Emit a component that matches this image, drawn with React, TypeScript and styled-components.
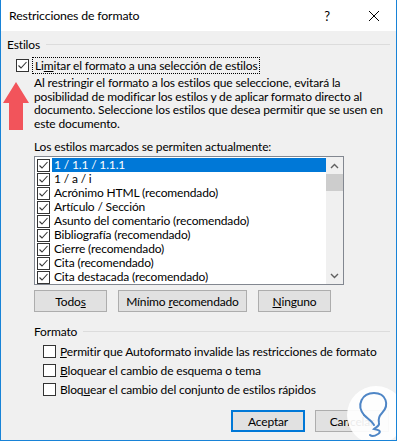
import styled, { createGlobalStyle } from 'styled-components';

const GlobalStyle = createGlobalStyle`
  html, body { margin: 0; padding: 0; background: #fff; }
  body { font-family: Lato, 'Liberation Sans', sans-serif; font-size: 12px; letter-spacing: -0.15px; color: #000; }
`;

const styles = [
  '1 / 1.1 / 1.1.1',
  '1 / a / i',
  'Acrónimo HTML (recomendado)',
  'Artículo / Sección',
  'Asunto del comentario (recomendado)',
  'Bibliografía (recomendado)',
  'Cierre (recomendado)',
  'Cita (recomendado)',
  'Cita destacada (recomendado)',
];

const Check = ({ checked }: { checked?: boolean }) => (
  <Box>
    {checked && (
      <svg width="11" height="11" viewBox="0 0 11 11">
        <path d="M1.5 5.5 L4 8 L9.5 2" fill="none" stroke="#333" strokeWidth="1.1" />
      </svg>
    )}
  </Box>
);

const App = () => (
  <>
    <GlobalStyle />
    <Window>
      <TitleBar>
        <Title>Restricciones de formato</Title>
        <Help>?</Help>
        <Close>
          <svg width="12" height="12" viewBox="0 0 12 12">
            <path d="M1 1 L11 11 M11 1 L1 11" stroke="#000" strokeWidth="1" />
          </svg>
        </Close>
      </TitleBar>

      <Body>
        <GroupHeader>
          <span>Estilos</span>
          <Rule />
        </GroupHeader>

        <MainOption>
          <Check checked />
          <Focus>
            Li<u>m</u>itar el formato a una selección de estilos
          </Focus>
        </MainOption>

        <Indented>
          <Paragraph>
            Al restringir el formato a los estilos que seleccione, evitará la
            <br />
            posibilidad de modificar los estilos y de aplicar formato directo al
            <br />
            documento. Seleccione los estilos que desea permitir que se usen en
            <br />
            este documento.
          </Paragraph>
          <ListLabel>Los estilos marcados se permiten actualmente:</ListLabel>

          <ListBox>
            <Rows>
              {styles.map((s, i) => (
                <Row key={s}>
                  <Check checked />
                  <RowText selected={i === 0}>{s}</RowText>
                </Row>
              ))}
            </Rows>
            <ScrollBar>
              <Arrow>
                <svg width="9" height="6" viewBox="0 0 9 6">
                  <path d="M1 5 L4.5 1.5 L8 5" fill="none" stroke="#606060" strokeWidth="1.4" />
                </svg>
              </Arrow>
              <Thumb />
              <Track />
              <Arrow>
                <svg width="9" height="6" viewBox="0 0 9 6">
                  <path d="M1 1 L4.5 4.5 L8 1" fill="none" stroke="#606060" strokeWidth="1.4" />
                </svg>
              </Arrow>
            </ScrollBar>
          </ListBox>

          <ButtonRow>
            <Button w={73}><span>Todo<u>s</u></span></Button>
            <Button w={129}><span>Mínimo <u>r</u>ecomendado</span></Button>
            <Button w={73}><span><u>N</u>inguno</span></Button>
          </ButtonRow>

          <GroupHeader sub>
            <span>Formato</span>
            <Rule />
          </GroupHeader>
        </Indented>

        <Options>
          <Option>
            <Check />
            <span><u>P</u>ermitir que Autoformato invalide las restricciones de formato</span>
          </Option>
          <Option>
            <Check />
            <span><u>B</u>loquear el cambio de esquema o tema</span>
          </Option>
          <Option>
            <Check />
            <span>Bloq<u>u</u>ear el cambio del conjunto de estilos rápidos</span>
          </Option>
        </Options>

        <Footer>
          <Button w={74} primary><span>Aceptar</span></Button>
          <Button w={74}><span>Cancelar</span></Button>
        </Footer>
      </Body>

      <RedArrow width="28" height="50" viewBox="0 0 28 50">
        <path d="M14 0 L27 21 L21 21 L21 48 L7 48 L7 21 L1 21 Z" fill="#f2545b" />
      </RedArrow>

      <Watermark>
        <svg width="60" height="60" viewBox="0 0 60 60">
          <circle cx="30" cy="30" r="29" fill="#fff" fillOpacity="0.92" />
          <path
            d="M18 30 C10 20 16 8 28 8 C40 8 44 20 36 28 C33 31 32 34 33 38 C34 41 30 42 28 44 C33 45 36 46 32 49 C29 51 26 52 24 50"
            fill="none"
            stroke="#4f86c6"
            strokeWidth="2"
            strokeLinecap="round"
          />
          <path d="M18 30 C22 34 26 36 28 40" fill="none" stroke="#4f86c6" strokeWidth="2" strokeLinecap="round" />
        </svg>
      </Watermark>
    </Window>
  </>
);

export default App;

const Window = styled.div`
  position: relative;
  width: 397px;
  height: 441px;
  box-sizing: border-box;
  border: 1px solid #1883d7;
  border-top: none;
  background: #f0f0f0;
  overflow: hidden;
`;

const TitleBar = styled.div`
  height: 31px;
  background: #fff;
  display: flex;
  align-items: center;
  padding-left: 8px;
`;

const Title = styled.div`
  flex: 1;
  font-size: 12.3px;
`;

const Help = styled.div`
  width: 16px;
  text-align: center;
  font-size: 13px;
  margin-right: 33px;
`;

const Close = styled.div`
  display: flex;
  margin-right: 16px;
`;

const Body = styled.div`
  padding: 5px 6px 0 6px;
  display: flex;
  flex-direction: column;
  white-space: nowrap;
`;

const GroupHeader = styled.div<{ sub?: boolean }>`
  display: flex;
  align-items: center;
  height: 16px;
  margin-top: ${p => (p.sub ? '11px' : '0')};
  gap: 6px;
`;

const Rule = styled.div`
  flex: 1;
  height: 1px;
  background: #dcdcdc;
`;

const Box = styled.span`
  width: 13px;
  height: 13px;
  box-sizing: border-box;
  border: 1px solid #333;
  background: #fff;
  display: inline-flex;
  align-items: center;
  justify-content: center;
  flex: none;
`;

const MainOption = styled.div`
  display: flex;
  align-items: center;
  margin-top: 5px;
  height: 17px;
  padding-left: 9px;
  gap: 3px;
`;

const Focus = styled.span`
  border: 1px dotted #000;
  padding: 0 2px;
  line-height: 15px;
`;

const Indented = styled.div`
  padding-left: 27px;
  display: flex;
  flex-direction: column;
`;

const Paragraph = styled.p`
  margin: 2px 0 0 0;
  line-height: 13.5px;
`;

const ListLabel = styled.div`
  margin-top: 10px;
  line-height: 13px;
`;

const ListBox = styled.div`
  margin-top: 3px;
  width: 310px;
  height: 129px;
  box-sizing: border-box;
  border: 1px solid #828790;
  background: #fff;
  display: flex;
  padding: 1px 0 0 2px;
`;

const Rows = styled.div`
  flex: 1;
  display: flex;
  flex-direction: column;
`;

const Row = styled.div`
  display: flex;
  align-items: center;
  height: 14px;
  gap: 2px;
`;

const RowText = styled.span<{ selected?: boolean }>`
  flex: 1;
  height: 14px;
  line-height: 14px;
  padding-left: 2px;
  background: ${p => (p.selected ? '#0078d7' : 'transparent')};
  color: ${p => (p.selected ? '#fff' : '#000')};
`;

const ScrollBar = styled.div`
  width: 17px;
  margin-top: -1px;
  display: flex;
  flex-direction: column;
  background: #f0f0f0;
`;

const Arrow = styled.div`
  height: 17px;
  display: flex;
  align-items: center;
  justify-content: center;
`;

const Thumb = styled.div`
  height: 17px;
  background: #cdcdcd;
`;

const Track = styled.div`
  flex: 1;
`;

const ButtonRow = styled.div`
  display: flex;
  gap: 11px;
  margin-top: 5px;
`;

const Button = styled.div<{ w: number; primary?: boolean }>`
  width: ${p => p.w}px;
  height: 22px;
  box-sizing: border-box;
  background: #e1e1e1;
  border: ${p => (p.primary ? '2px solid #0078d7' : '1px solid #adadad')};
  display: flex;
  align-items: center;
  justify-content: center;
`;

const Options = styled.div`
  display: flex;
  flex-direction: column;
  margin-top: 3px;
  padding-left: 36px;
`;

const Option = styled.div`
  display: flex;
  align-items: center;
  height: 19px;
  gap: 4px;
`;

const Footer = styled.div`
  display: flex;
  justify-content: flex-end;
  gap: 10px;
  margin-top: 11px;
  padding-right: 1px;
`;

const RedArrow = styled.svg`
  position: absolute;
  left: 1px;
  top: 82px;
`;

const Watermark = styled.div`
  position: absolute;
  right: -10px;
  bottom: -8px;
`;
